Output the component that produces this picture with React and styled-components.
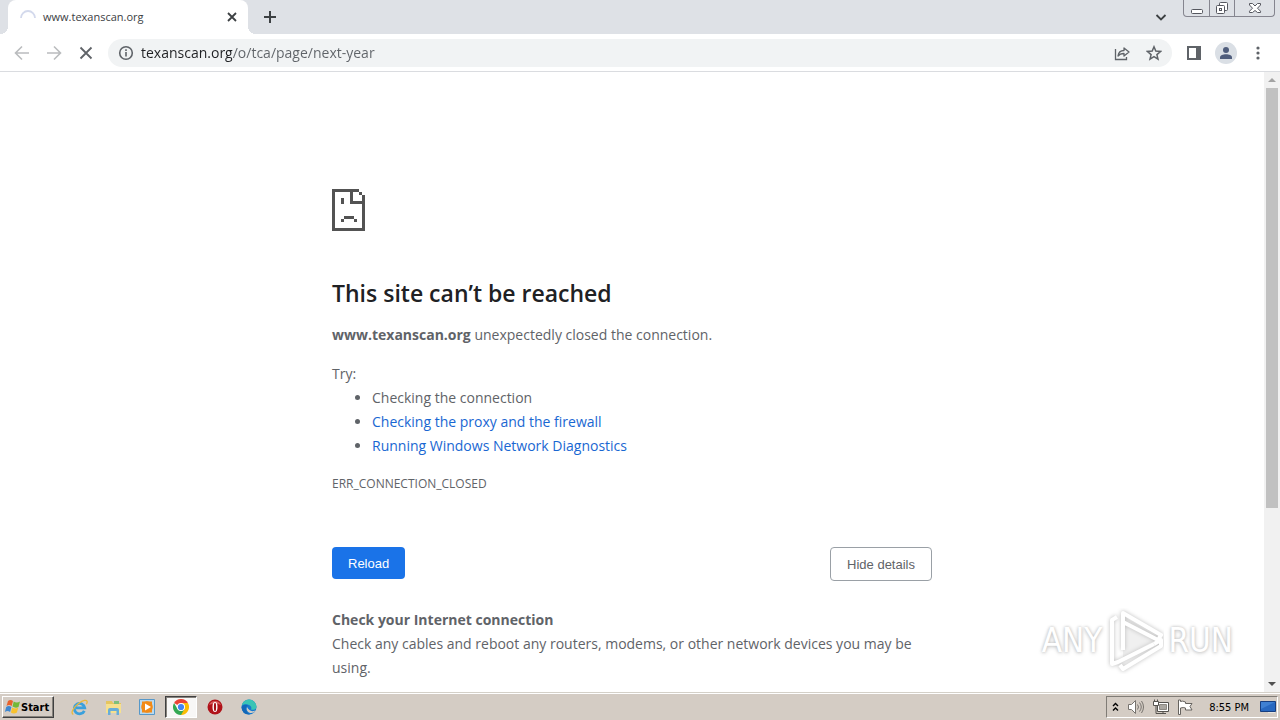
import React from "react"
import styled, { createGlobalStyle, css } from "styled-components"

const variables = {
  color: {
    frame: "#dee1e6",
    toolbar: "#ffffff",
    field: "#f1f3f4",
    icon: "#5f6368",
    text: "#202124",
    muted: "#5f6368",
    link: "#1967d2",
    primary: "#1a73e8",
    taskbar: "#d4ccc4",
  },
  font: {
    page: `"Open Sans", "Noto Sans", sans-serif`,
    system: `"DejaVu Sans Condensed", "DejaVu Sans", sans-serif`,
  },
}

const GlobalStyle = createGlobalStyle`
  *, *::before, *::after {
    box-sizing: border-box;
  }

  body {
    margin: 0;
    background: ${variables.color.toolbar};
  }

  button, input {
    font: inherit;
    color: inherit;
    margin: 0;
    padding: 0;
    border: 0;
    background: none;
  }

  svg {
    display: block;
    flex: none;
  }
`

const Screen = styled.div`
  display: flex;
  flex-direction: column;
  height: 100vh;
  overflow: hidden;
  font-family: ${variables.font.page};
`

/* Tab strip */

const TabStrip = styled.header`
  display: flex;
  flex: none;
  height: 34px;
  padding-left: 8px;
  background: ${variables.color.frame};
`

const Tab = styled.div`
  position: relative;
  display: flex;
  align-items: center;
  gap: 7px;
  width: 240px;
  padding: 0 8px 0 12px;
  border-radius: 8px 8px 0 0;
  background: ${variables.color.toolbar};

  &::before,
  &::after {
    content: "";
    position: absolute;
    bottom: 0;
    width: 8px;
    height: 8px;
  }

  &::before {
    right: 100%;
    background: radial-gradient(circle at 0 0, ${variables.color.frame} 8px, #fff 8px);
  }

  &::after {
    left: 100%;
    background: radial-gradient(circle at 100% 0, ${variables.color.frame} 8px, #fff 8px);
  }
`

const TabTitle = styled.span`
  flex: 1;
  font-size: 11px;
  line-height: 16px;
  color: #3c4043;
`

const IconButton = styled.button`
  display: flex;
  align-items: center;
  justify-content: center;
  width: ${props => props.$size || 32}px;
  height: ${props => props.$size || 32}px;
  border-radius: 50%;
  color: ${props => props.$color || variables.color.icon};
`

const StripActions = styled.div`
  display: flex;
  flex: 1;
  align-items: center;
  padding: 0 7px 0 6px;
`

const Spacer = styled.div`
  flex: 1;
`

const WindowControls = styled.div`
  display: flex;
  align-self: flex-start;
  height: 17px;
  margin: 0 -2px 0 6px;
  border: 1px solid #85858f;
  border-top: 0;
  border-radius: 0 0 4px 4px;
`

const WindowButton = styled.button`
  display: flex;
  align-items: center;
  justify-content: center;
  width: ${props => (props.$wide ? 40 : 25)}px;
  color: #55575f;

  & + & {
    border-left: 1px solid #85858f;
  }
`

/* Toolbar */

const Toolbar = styled.nav`
  display: flex;
  flex: none;
  align-items: center;
  height: 38px;
  padding: 0 6px;
  border-bottom: 1px solid #dadce0;
  background: ${variables.color.toolbar};
`

const AddressBar = styled.div`
  display: flex;
  flex: 1;
  align-items: center;
  height: 28px;
  margin: 0 6px;
  padding: 0 2px 0 10px;
  border-radius: 14px;
  color: ${variables.color.icon};
  background: ${variables.color.field};
`

const AddressInput = styled.input`
  flex: 1;
  min-width: 0;
  margin-left: 7px;
  font-size: 14px;
  line-height: 20px;
  color: transparent;
  background: linear-gradient(
    90deg,
    ${variables.color.text} 92px,
    ${variables.color.muted} 92px
  );
  background-clip: text;
  outline: none;
`

const Avatar = styled.span`
  display: flex;
  align-items: center;
  justify-content: center;
  width: 22px;
  height: 22px;
  border-radius: 50%;
  background: #dadfe5;
`

/* Page */

const Viewport = styled.div`
  position: relative;
  display: flex;
  flex: 1;
  min-height: 0;
`

const Page = styled.main`
  flex: 1;
  overflow: hidden;
  padding: 117px 24px 0;
  font-size: 14px;
  line-height: 24px;
  color: ${variables.color.muted};
`

const Content = styled.div`
  max-width: 600px;
  margin: 0 auto;
`

const Title = styled.h1`
  margin: 47px 0 15px;
  font-size: 23px;
  line-height: 30px;
  font-weight: 600;
  color: ${variables.color.text};
`

const Paragraph = styled.p`
  margin: 0;
`

const Suggestions = styled.div`
  margin-top: 15px;
`

const List = styled.ul`
  margin: 0;
  padding-left: 40px;
`

const PageLink = styled.a`
  color: ${variables.color.link};
  text-decoration: none;
`

const ErrorCode = styled.p`
  margin: 16px 0 0;
  font-size: 12px;
  line-height: 20px;
`

const Actions = styled.div`
  display: flex;
  align-items: flex-start;
  justify-content: space-between;
  margin: 53px 0 27px;
`

const pageButton = css`
  padding: 1px 16px 0;
  border-radius: 4px;
  font-family: "Liberation Sans", sans-serif;
  font-size: 13px;
`

const PrimaryButton = styled.button`
  ${pageButton}
  height: 32px;
  color: #fff;
  background: ${variables.color.primary};
`

const SecondaryButton = styled.button`
  ${pageButton}
  height: 34px;
  border: 1px solid #9aa0a6;
  background: #fff;
`

const Subtitle = styled.h2`
  margin: 0;
  font-size: 14px;
  line-height: 24px;
  font-weight: 700;
`

const Scrollbar = styled.div`
  display: flex;
  flex: none;
  flex-direction: column;
  align-items: center;
  width: 16px;
  background: #f1f1f1;
`

const ScrollArrow = styled.button`
  display: flex;
  flex: none;
  align-items: center;
  justify-content: center;
  width: 16px;
  height: 16px;
`

const ScrollTrack = styled.div`
  flex: 1;
  width: 12px;
`

const ScrollThumb = styled.div`
  height: calc(100% * 5 / 7);
  background: #c1c1c1;
`

const Watermark = styled.div`
  position: absolute;
  right: 47px;
  bottom: 18px;
  display: flex;
  align-items: center;
  gap: 4px;
  font-family: ${variables.font.system};
  font-size: 33px;
  line-height: 66px;
  color: #fff;
  text-shadow: 0 0 3px #c0c0c0, 0 1px 4px #cccccc;
  pointer-events: none;
`

/* Taskbar */

const Taskbar = styled.footer`
  display: flex;
  flex: none;
  align-items: center;
  height: 28px;
  padding: 1px 2px 0;
  border-top: 1px solid #d4d0c8;
  box-shadow: inset 0 1px #fff;
  font-family: ${variables.font.system};
  font-size: 11px;
  color: #000;
  background: ${variables.color.taskbar};
`

const StartButton = styled.button`
  display: flex;
  align-items: center;
  width: 52px;
  height: 22px;
  padding-left: 1px;
  border: 1px solid;
  border-color: #fff #404040 #404040 #fff;
  box-shadow: inset -1px -1px #86827c;
  font-weight: 700;
`

const QuickLaunch = styled.div`
  display: flex;
  gap: 2px;
  margin-left: 9px;
`

const TaskButton = styled.button`
  display: flex;
  align-items: center;
  justify-content: center;
  width: 32px;
  height: 22px;

  ${props =>
    props.$active &&
    css`
      border: 1px solid;
      border-color: #404040 #fff #fff #404040;
      box-shadow: inset 1px 1px #86827c;
      background: #f8f7f6;
    `}
`

const Tray = styled.div`
  display: flex;
  align-items: center;
  height: 22px;
  padding: 0 1px 0 4px;
  border: 1px solid;
  border-color: #807c76 #fff #fff #807c76;
`

const TrayButton = styled.button`
  display: flex;
  align-items: center;
  justify-content: center;
  width: ${props => props.$width || 24}px;
  height: 20px;
`

const Clock = styled.time`
  margin: 0 10px 0 8px;
`

const Line = ({ size = 16, width = 1.6, children, ...rest }) => (
  <svg
    width={size}
    height={size}
    viewBox="0 0 16 16"
    fill="none"
    stroke="currentColor"
    strokeWidth={width}
    {...rest}
  >
    {children}
  </svg>
)

const SadPage = () => (
  <svg width="33" height="42" fill="#535353" shapeRendering="crispEdges">
    <path d="M0 0h27v3H3v36h27V6h3v36H0z" />
    <path d="M18 0h3v12h12v3H18zM27 3h3v3h-3zM9 9h3v6H9zM12 27h10v3H12zM9 30h3v3H9zM22 30h3v3h-3z" />
  </svg>
)

const PlayLogo = () => (
  <svg width="58" height="66" viewBox="0 0 58 66" fill="none">
    <path d="M17 8v42l36-20z" fill="#f0f0f0" />
    <g
      stroke="#fff"
      strokeWidth="4"
      strokeLinejoin="round"
      style={{ filter: "drop-shadow(0 0 2px #bbb)" }}
    >
      <path d="M11 9 6 12v44l6-2 36-18" />
      <path d="M17 42V5l38 22-3 5-35-18" />
      <path d="M48 36l7-4v6L17 61l-3-4" />
    </g>
  </svg>
)

const StartFlag = () => (
  <svg width="17" height="16" viewBox="0 0 16 16">
    <path d="M3.500 2q2.500-2 5 0L7.200 7Q4.500 5 2 7z" fill="#e8622c" />
    <path d="M9.200 2.500q3 2 6.300 0L14 8q-3 1.500-6-.5z" fill="#73b838" />
    <path d="M1.700 8q2.500-2 5.200 0l-1.300 5q-2.600-2-5.200 0z" fill="#3e87d0" />
    <path d="M7.700 8.500q3 2 6.100 0l-1.400 5q-3 2-6 0z" fill="#f8c22e" />
  </svg>
)

const InternetExplorer = () => (
  <svg width="17" height="17" viewBox="0 0 17 17" fill="none">
    <path
      d="M13.300 11.800A5.200 5.200 0 1 1 13.700 8.800H5"
      stroke="#3aa0dc"
      strokeWidth="2.800"
    />
    <path
      d="M2.300 15.500c-3-1.500 0-7 5-10.800S16 .500 16.200 2.800c0 .8-.3 1.600-.8 2.500"
      stroke="#e9b83b"
      strokeWidth="1.300"
    />
  </svg>
)

const Folder = () => (
  <svg width="17" height="17" viewBox="0 0 17 17">
    <path d="M1 2h6l1 2h8v9H1z" fill="#e5c55f" />
    <path d="M9 2h5v3H9z" fill="#7fbf7a" />
    <path d="M1 5h15v9H1z" fill="#f6e08e" />
    <path d="M3 16v-5q0-2 2-2h7q2 0 2 2v5h-2.500v-4h-6v4z" fill="#68add8" />
  </svg>
)

const MediaPlayer = () => (
  <svg width="16" height="16" viewBox="0 0 16 16">
    <path d="M.500.500h15v15H.500z" fill="#b9d9ef" stroke="#5798c9" />
    <path d="M3 2.500h10v11H3z" fill="#f28a17" />
    <circle cx="8" cy="8" r="5.800" fill="#f28a17" />
    <path d="M6 4.500v7L12 8z" fill="#fff" />
  </svg>
)

const Chrome = () => (
  <svg width="16" height="16" viewBox="0 0 16 16">
    <path d="M8 8 1.070 4A8 8 0 0 1 14.930 4z" fill="#ea4335" />
    <path d="M8 8V4h6.930A8 8 0 0 1 8 16z" fill="#fbbc04" />
    <path d="M8 8 11.500 10 8 16A8 8 0 0 1 1.070 4L4.500 10z" fill="#34a853" />
    <circle cx="8" cy="8" r="4" fill="#fff" />
    <circle cx="8" cy="8" r="3.100" fill="#4285f4" />
  </svg>
)

const Opera = () => (
  <svg width="16" height="16" viewBox="0 0 16 16">
    <circle cx="8" cy="8" r="7.500" fill="#b01219" />
    <path d="M2 6a6.500 6.500 0 0 1 12 0q-6-3-12 0z" fill="#d65a5c" />
    <ellipse cx="8" cy="8" rx="2.500" ry="5" fill="#fff" />
    <ellipse cx="8" cy="8" rx="1.100" ry="4.200" fill="#a30f16" />
  </svg>
)

const Edge = () => (
  <svg width="16" height="16" viewBox="0 0 16 16">
    <circle cx="8" cy="8" r="7.500" fill="#1679ce" />
    <path
      d="M.600 7A7.500 7.500 0 0 1 15.500 7.500C15.500 11 12 11 10 10.500q1-2-.5-3.500C7 4.500 2 4.500.600 7z"
      fill="#39c4b5"
    />
    <path
      d="M6 8q-1.500 4 3 6 4 .500 5.500-2.500-4 1.500-6-.5Q7 10 6 8z"
      fill={variables.color.taskbar}
    />
    <path d="M.500 8Q3 4.500 7 6.500 4 8 5 11q1 3 4 4.400Q1 16 .500 8z" fill="#1267b8" />
  </svg>
)

const BrowserTabs = () => (
  <TabStrip>
    <Tab>
      <Line width={1.8}>
        <path d="M1 9A7 7 0 0 1 15 9" stroke="#d3d9ec" />
      </Line>
      <TabTitle>www.texanscan.org</TabTitle>
      <IconButton $size={16} $color="#3c4043" aria-label="Close tab">
        <Line>
          <path d="M4 4l8 8M12 4l-8 8" strokeWidth="1.800" />
        </Line>
      </IconButton>
    </Tab>
    <StripActions>
      <IconButton $color="#3c4043" aria-label="New tab">
        <Line width={2}>
          <path d="M8 2v12M2 8h12" />
        </Line>
      </IconButton>
      <Spacer />
      <IconButton $color="#3c4043" aria-label="Search tabs">
        <Line>
          <path d="M3.500 6 8 10.500 12.500 6" strokeWidth="1.800" />
        </Line>
      </IconButton>
      <WindowControls>
        <WindowButton aria-label="Minimize">
          <Line width={1}>
            <rect x="2.500" y="9.500" width="11" height="4" rx="1" fill="#fff" />
          </Line>
        </WindowButton>
        <WindowButton aria-label="Restore">
          <Line width={1}>
            <rect x="5.500" y="2.500" width="8" height="8" rx="1" fill="#fff" />
            <rect x="2.500" y="5.500" width="8" height="8" rx="1" fill="#fff" />
            <rect x="5.500" y="8.500" width="2" height="2" />
          </Line>
        </WindowButton>
        <WindowButton $wide aria-label="Close">
          <Line width={1}>
            <path
              d="M2.500 3.500h3L8 6l2.500-2.500h3v1.500L10.500 8.200l3 3v1.300h-3L8 10.500l-2.500 2h-3v-1.300l3-3-3-3.200z"
              fill="#fff"
            />
          </Line>
        </WindowButton>
      </WindowControls>
    </StripActions>
  </TabStrip>
)

const BrowserToolbar = () => (
  <Toolbar>
    <IconButton $color="#babcbe" aria-label="Back">
      <Line>
        <path d="M15 8H2M8 1.500 1.500 8 8 14.500" />
      </Line>
    </IconButton>
    <IconButton $color="#babcbe" aria-label="Forward">
      <Line>
        <path d="M1 8h13M8 1.500 14.500 8 8 14.500" />
      </Line>
    </IconButton>
    <IconButton aria-label="Stop loading">
      <Line width={1.8}>
        <path d="M2.500 2.500l11 11M13.500 2.500l-11 11" />
      </Line>
    </IconButton>
    <AddressBar>
      <Line>
        <circle cx="8" cy="8" r="6.300" />
        <path d="M8 7v4.500M8 4.300v1.700" />
      </Line>
      <AddressInput
        type="text"
        aria-label="Address and search bar"
        defaultValue="texanscan.org/o/tca/page/next-year"
      />
      <IconButton aria-label="Share this page">
        <Line width={1.3}>
          <path d="M1.500 4v10.500h11V12" />
          <path
            d="M4 11c.500-4 3-5.500 6-5.500V3l5 4-5 4V8.500c-3 0-4.500.500-6 2.500z"
            strokeLinejoin="round"
          />
        </Line>
      </IconButton>
      <IconButton aria-label="Bookmark this tab">
        <Line width={1.5}>
          <path d="m8 1.800 1.800 4.300 4.700.400-3.600 3.100 1.100 4.500L8 11.700l-4 2.400 1.100-4.500L1.500 6.500l4.700-.4z" />
        </Line>
      </IconButton>
    </AddressBar>
    <IconButton aria-label="Side panel">
      <Line width={2}>
        <path d="M2 2h12v12H2z" />
        <path d="M10 2h4v12h-4z" fill="currentColor" stroke="none" />
      </Line>
    </IconButton>
    <IconButton aria-label="Profile">
      <Avatar>
        <svg width="14" height="14" viewBox="0 0 14 14" fill="#4f5d7c">
          <circle cx="7" cy="4" r="3" />
          <path d="M1 13v-1.500C1 9.500 4 8.300 7 8.300s6 1.200 6 3.200V13z" />
        </svg>
      </Avatar>
    </IconButton>
    <IconButton aria-label="Menu">
      <svg width="16" height="16" fill="currentColor">
        <circle cx="8" cy="3" r="1.600" />
        <circle cx="8" cy="8" r="1.600" />
        <circle cx="8" cy="13" r="1.600" />
      </svg>
    </IconButton>
  </Toolbar>
)

const ErrorPage = () => (
  <Page>
    <Content>
      <SadPage />
      <Title>This site can’t be reached</Title>
      <Paragraph>
        <strong>www.texanscan.org</strong> unexpectedly closed the connection.
      </Paragraph>
      <Suggestions>
        <Paragraph>Try:</Paragraph>
        <List>
          <li>Checking the connection</li>
          <li>
            <PageLink href="#proxy">Checking the proxy and the firewall</PageLink>
          </li>
          <li>
            <PageLink href="#diagnostics">Running Windows Network Diagnostics</PageLink>
          </li>
        </List>
      </Suggestions>
      <ErrorCode>ERR_CONNECTION_CLOSED</ErrorCode>
      <Actions>
        <PrimaryButton>Reload</PrimaryButton>
        <SecondaryButton>Hide details</SecondaryButton>
      </Actions>
      <Subtitle>Check your Internet connection</Subtitle>
      <Paragraph>
        Check any cables and reboot any routers, modems, or other network devices
        you may be using.
      </Paragraph>
    </Content>
  </Page>
)

const SystemTaskbar = () => (
  <Taskbar>
    <StartButton>
      <StartFlag />
      Start
    </StartButton>
    <QuickLaunch>
      <TaskButton aria-label="Internet Explorer">
        <InternetExplorer />
      </TaskButton>
      <TaskButton aria-label="Explorer">
        <Folder />
      </TaskButton>
      <TaskButton aria-label="Media Player">
        <MediaPlayer />
      </TaskButton>
      <TaskButton $active aria-label="Chrome">
        <Chrome />
      </TaskButton>
      <TaskButton aria-label="Opera">
        <Opera />
      </TaskButton>
      <TaskButton aria-label="Edge">
        <Edge />
      </TaskButton>
    </QuickLaunch>
    <Spacer />
    <Tray>
      <TrayButton $width={8} aria-label="Show hidden icons">
        <svg width="7" height="10" fill="none" stroke="#000" strokeWidth="1.400">
          <path d="M1 4l2.500-2.500L6 4M1 8.500 3.500 6 6 8.500" />
        </svg>
      </TrayButton>
      <TrayButton $width={34} aria-label="Volume">
        <Line width={1} color="#77736e">
          <path d="M.500 5.500h3l4-4v13l-4-4h-3z" fill="#fff" />
          <path d="M9.500 5.500q2 2.500 0 5M11.500 3.500q3.500 4.500 0 9M13.500 2q4 6 0 12" />
        </Line>
      </TrayButton>
      <TrayButton $width={16} aria-label="Network">
        <Line width={1} color="#55524e">
          <path d="M4.500 3.500h11v9h-11z" fill="#fff" />
          <path d="M6.500 5.500h7v5h-7z" fill="#aaa6a0" stroke="#8c8882" />
          <path d="M.500 2.500h5v4h-5z" fill="#fff" />
          <path d="M1.500.500v2M4.500.500v2M3 6.500v8h10M10 12.500v2" />
        </Line>
      </TrayButton>
      <TrayButton $width={32} aria-label="Action Center">
        <Line width={1} color="#66635f">
          <path
            d="M1.500 1v14.500h2V9q3-1 5 0v2h6.500l-2-3.500 2-3H8.500V3q-3-1.500-5-.5V1z"
            fill="#fff"
          />
        </Line>
      </TrayButton>
      <Clock>8:55 PM</Clock>
      <TrayButton $width={17} aria-label="Show desktop">
        <svg width="16" height="14" viewBox="0 0 16 14">
          <path d="M.500 1.500h15v10H.500z" fill="#2868c0" stroke="#173e80" />
          <path d="M1 2h14L1 9z" fill="#3f80d2" />
          <path d="M8 12h7v1H8z" fill="#e8e6e2" />
        </svg>
      </TrayButton>
    </Tray>
  </Taskbar>
)

const App = () => (
  <>
    <GlobalStyle />
    <Screen>
      <BrowserTabs />
      <BrowserToolbar />
      <Viewport>
        <ErrorPage />
        <Scrollbar>
          <ScrollArrow aria-label="Scroll up">
            <svg width="8" height="4" fill="#a3a3a3">
              <path d="M0 4 4 0l4 4z" />
            </svg>
          </ScrollArrow>
          <ScrollTrack>
            <ScrollThumb />
          </ScrollTrack>
          <ScrollArrow aria-label="Scroll down">
            <svg width="8" height="4" fill="#505050">
              <path d="M0 0h8L4 4z" />
            </svg>
          </ScrollArrow>
        </Scrollbar>
        <Watermark>
          <span>ANY</span>
          <PlayLogo />
          <span>RUN</span>
        </Watermark>
      </Viewport>
      <SystemTaskbar />
    </Screen>
  </>
)

export default App
